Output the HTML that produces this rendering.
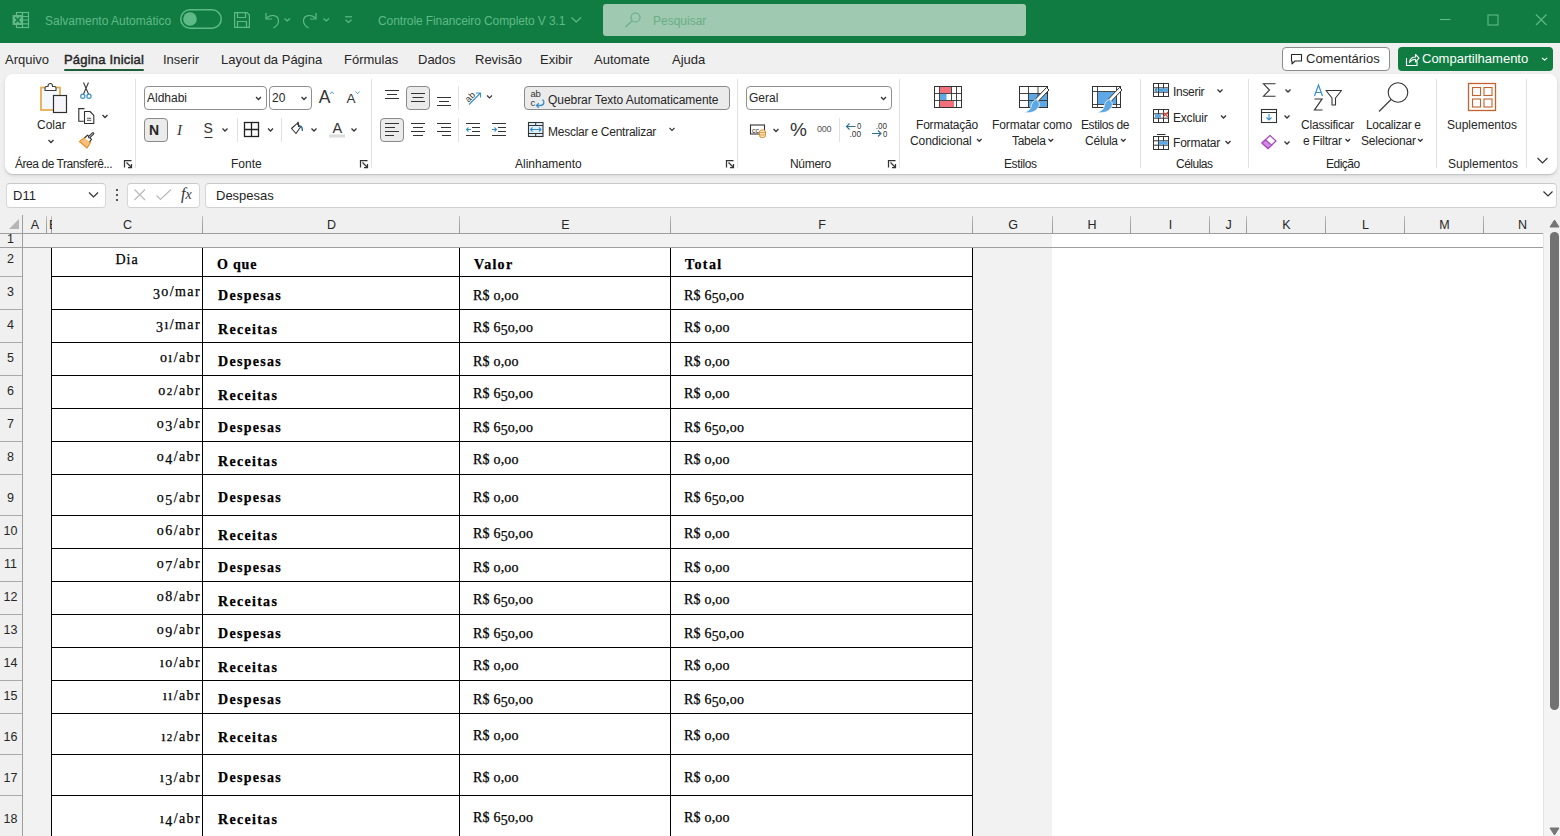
<!DOCTYPE html>
<html><head><meta charset="utf-8">
<style>
*{margin:0;padding:0;box-sizing:border-box}
html,body{width:1560px;height:836px;overflow:hidden;background:#f0f0f0;font-family:"Liberation Sans",sans-serif;color:#242424;position:relative}
.a{position:absolute;white-space:nowrap}
svg{position:absolute;overflow:visible}
#title{left:0;top:0;width:1560px;height:43px;background:#107c42}
.tt{color:#6cb98b;font-size:12px}
.menu{font-size:13px;color:#262626;top:52px;line-height:16px}
#ribbon{left:5px;top:74px;width:1552px;height:100px;background:#fff;border-radius:8px;box-shadow:0 1px 1px rgba(0,0,0,.12),0 2px 4px rgba(0,0,0,.10)}
.gl{font-size:12px;color:#262626;top:157px;line-height:14px}
.div{background:#e1e1e1;width:1px}
.rt{font-size:12px;color:#262626;line-height:16px}
.box{border:1px solid #8f8f8f;border-radius:4px;background:#fff}
.btnsel{background:#ebebeb;border:1px solid #8a8a8a;border-radius:4px}
.ch{width:8px;height:5px}
/* grid */
.ch_h{font-size:12.5px;color:#262626;top:218px;line-height:14px;text-align:center;padding-left:2px}
.rh{font-size:12.5px;color:#262626;left:0;width:21px;text-align:center;line-height:14px}
.hl{background:#000;height:1px}
.vl{background:#000;width:1px}
.gd{font-family:"Liberation Serif",serif;font-size:14px;color:#000;line-height:16px;-webkit-text-stroke:0.25px #000}
.b{font-weight:bold}
</style></head><body>

<!-- TITLE BAR -->
<div class="a" id="title"></div>
<svg style="left:0;top:0" width="1" height="1">
 <g fill="none" stroke="#5fba87" stroke-width="1.2">
  <rect x="16.5" y="12.5" width="12" height="15"/>
  <path d="M22.5 12.5 V27.5 M16.5 16.5 H28.5 M16.5 20 H28.5 M16.5 23.8 H28.5"/>
 </g>
 <rect x="12.6" y="15" width="10" height="10" fill="#5fba87"/>
 <path d="M15.2 17.2 L20.3 22.8 M20.3 17.2 L15.2 22.8" stroke="#107c41" stroke-width="1.5"/>
 <rect x="180.75" y="9.75" width="40.5" height="18.5" rx="9.25" fill="none" stroke="#5fba87" stroke-width="1.5"/>
 <circle cx="190" cy="19" r="6.8" fill="#5fba87"/>
 <g fill="none" stroke="#5fba87" stroke-width="1.2">
  <path d="M234.6 12.6 H247 L249.4 15 V27.4 H234.6 Z"/>
  <path d="M237.5 12.6 V17.5 H245.5 V12.6"/>
  <path d="M237.5 27.4 V21.5 H246.5 V27.4"/>
  <path d="M266 13 V19 H272"/><path d="M266.5 18.5 C270 14 278.5 14.5 278.5 21 C278.5 24.5 276 26.5 273.5 28"/>
  <path d="M284.5 18.5 L287.2 21 L289.9 18.5"/>
  <path d="M316 13 V19 H310"/><path d="M315.5 18.5 C312 14 303.5 14.5 303.5 21 C303.5 24.5 306 26.5 308.5 28"/>
  <path d="M323.5 18.5 L326.2 21 L328.9 18.5"/>
  <path d="M345 16.8 H352"/><path d="M345.5 19.8 L348.5 22.5 L351.5 19.8"/>
  <path d="M571.5 17.5 L576.2 22 L581 17.5"/>
 </g>
</svg>
<div class="a" style="left:45px;top:14px;font-size:12px;line-height:15px;color:#5fba87">Salvamento Automático</div>
<div class="a" style="left:378px;top:14px;font-size:12px;line-height:15px;color:#5fba87;letter-spacing:-0.1px">Controle Financeiro Completo V 3.1</div>
<div class="a" style="left:603px;top:4px;width:423px;height:32px;background:#9fc9b1;border-radius:3px"></div>
<svg style="left:0;top:0" width="1" height="1">
 <g fill="none" stroke="#6aae85" stroke-width="1.2">
  <circle cx="635.5" cy="17.5" r="4.5"/><path d="M632.3 20.8 L625.5 27"/>
 </g>
 <g fill="none" stroke="#5fba87" stroke-width="1.1">
  <path d="M1440 19.5 H1450.5"/>
  <rect x="1488" y="15" width="10" height="10"/>
  <path d="M1536 14.5 L1546.5 25 M1546.5 14.5 L1536 25"/>
 </g>
</svg>
<div class="a" style="left:653px;top:14px;font-size:12px;line-height:15px;color:#6aae85">Pesquisar</div>
<!-- comments / share -->
<div class="a" style="left:1282px;top:47px;width:108px;height:24px;border:1px solid #8c8c8c;border-radius:4px;background:#fff"></div>
<svg style="left:0;top:0" width="1" height="1"><path d="M1291.5 54.5 H1301.5 V61 H1295 L1292 63.8 V61 H1291.5 Z" fill="none" stroke="#262626" stroke-width="1.1" stroke-linejoin="round"/></svg>
<div class="a" style="left:1306px;top:51px;font-size:13px;line-height:16px;color:#262626">Comentários</div>
<div class="a" style="left:1398px;top:47px;width:155px;height:24px;background:#107c41;border-radius:4px"></div>
<svg style="left:0;top:0" width="1" height="1"><g fill="none" stroke="#fff" stroke-width="1.1" stroke-linejoin="round"><path d="M1406.5 58 V65.5 H1417 V61"/><path d="M1409.5 62.5 C1410 58.5 1412.5 57 1415.5 57 V54.5 L1419 58.2 L1415.5 61.8 V59.3 C1413 59.3 1411 60.5 1409.5 62.5 Z"/><path d="M1542 57.8 L1544.6 60.2 L1547.2 57.8"/></g></svg>
<div class="a" style="left:1422px;top:51px;font-size:13px;line-height:16px;color:#fff">Compartilhamento</div>


<!-- MENU -->
<div class="a menu" style="left:5px">Arquivo</div>
<div class="a menu" style="left:64px;letter-spacing:0.2px;-webkit-text-stroke:0.45px #262626">Página Inicial</div>
<div class="a" style="left:64px;top:69px;width:80px;height:2px;background:#1b5e37;border-radius:1px"></div>
<div class="a menu" style="left:163px">Inserir</div>
<div class="a menu" style="left:221px">Layout da Página</div>
<div class="a menu" style="left:344px">Fórmulas</div>
<div class="a menu" style="left:418px">Dados</div>
<div class="a menu" style="left:475px">Revisão</div>
<div class="a menu" style="left:540px">Exibir</div>
<div class="a menu" style="left:594px">Automate</div>
<div class="a menu" style="left:672px">Ajuda</div>

<!-- RIBBON -->
<div class="a" id="ribbon"></div>
<!-- dividers -->
<div class="a div" style="left:135px;top:79px;height:89px"></div>
<div class="a div" style="left:371px;top:79px;height:89px"></div>
<div class="a div" style="left:737px;top:79px;height:89px"></div>
<div class="a div" style="left:899px;top:79px;height:89px"></div>
<div class="a div" style="left:1140px;top:79px;height:89px"></div>
<div class="a div" style="left:1248px;top:79px;height:89px"></div>
<div class="a div" style="left:1436px;top:79px;height:89px"></div>
<div class="a div" style="left:1526px;top:79px;height:89px"></div>
<!-- group labels -->
<div class="a gl" style="left:15px;letter-spacing:-0.45px">Área de Transferê...</div>
<div class="a gl" style="left:231px">Fonte</div>
<div class="a gl" style="left:515px">Alinhamento</div>
<div class="a gl" style="left:790px;letter-spacing:-0.3px">Número</div>
<div class="a gl" style="left:1004px;letter-spacing:-0.4px">Estilos</div>
<div class="a gl" style="left:1176px;letter-spacing:-0.5px">Células</div>
<div class="a gl" style="left:1326px;letter-spacing:-0.5px">Edição</div>
<div class="a gl" style="left:1448px">Suplementos</div>
<!-- launchers + collapse -->
<svg style="left:0;top:0" width="1" height="1">
 <g fill="none" stroke="#333" stroke-width="1.25">
  <path d="M124.5 167.5 V160.5 H131.5 M126.5 162.5 L131.5 167.5 M128 167.5 H131.5 V164"/>
  <path d="M360.5 167.5 V160.5 H367.5 M362.5 162.5 L367.5 167.5 M364 167.5 H367.5 V164"/>
  <path d="M726.5 167.5 V160.5 H733.5 M728.5 162.5 L733.5 167.5 M730 167.5 H733.5 V164"/>
  <path d="M888.5 167.5 V160.5 H895.5 M890.5 162.5 L895.5 167.5 M892 167.5 H895.5 V164"/>
  <path d="M1537.5 158 L1542.5 163 L1547.5 158" stroke-width="1.2"/>
 </g>
</svg>

<!-- CLIPBOARD -->
<svg style="left:0;top:0" width="1" height="1">
 <rect x="41" y="87.5" width="19" height="22.5" fill="#f3f8fc" stroke="#e3a947" stroke-width="1.7"/>
 <path d="M45 90.5 V88 C45 87 45.5 86.5 46.5 86.5 H48 C48 84.5 49 83.5 50.3 83.5 C51.6 83.5 52.6 84.5 52.6 86.5 H54.5 C55.5 86.5 56 87 56 88 V90.5 Z" fill="#fff" stroke="#3b3b3b" stroke-width="1.1" stroke-linejoin="round"/>
 <rect x="53.5" y="95.5" width="13" height="17" fill="#f5f5fb" stroke="#2f2f2f" stroke-width="1.2"/>
 <path d="M48.5 140 L51 142.5 L53.5 140" fill="none" stroke="#333" stroke-width="1.25"/>
 <!-- scissors -->
 <path d="M83.5 82.5 L88.5 94 M88.5 82.5 L83.5 94" fill="none" stroke="#3b3b3b" stroke-width="1.1"/>
 <circle cx="82.8" cy="96.2" r="2.1" fill="none" stroke="#3a8fc8" stroke-width="1.2"/>
 <circle cx="89" cy="96.2" r="2.1" fill="none" stroke="#3a8fc8" stroke-width="1.2"/>
 <!-- copy -->
 <path d="M84.5 108.6 H78.8 V121.2 H83.8" fill="none" stroke="#2f2f2f" stroke-width="1.1"/>
 <path d="M84.5 111.5 H90 L93.8 115.3 V123.5 H84.5 Z" fill="#fff" stroke="#2f2f2f" stroke-width="1.1" stroke-linejoin="round"/>
 <path d="M87 118.3 H91.2 M87 120.3 H91.2" stroke="#3b3b3b" stroke-width="0.9"/>
 <path d="M102.5 115 L105 117.5 L107.5 115" fill="none" stroke="#333" stroke-width="1.25"/>
 <!-- brush -->
 <path d="M79.5 141.5 L85.5 137 L90.5 142.5 L87 148 Z" fill="#f7c07a" stroke="#e8912c" stroke-width="1.2" stroke-linejoin="round"/>
 <path d="M84.5 138 L87.5 135.2 L91.5 139.3 L89.5 142" fill="#fff" stroke="#2f2f2f" stroke-width="1.1" stroke-linejoin="round"/>
 <path d="M89.3 137 L93 133.5" stroke="#2f2f2f" stroke-width="2.6" stroke-linecap="round"/>
 <path d="M89.3 137 L93 133.5" stroke="#fff" stroke-width="0.8" stroke-linecap="round"/>
</svg>
<div class="a rt" style="left:37px;top:117px">Colar</div>

<!-- FONT -->
<div class="a box" style="left:144px;top:86px;width:123px;height:24px"></div>
<div class="a rt" style="left:147px;top:90px">Aldhabi</div>
<div class="a box" style="left:269px;top:86px;width:43px;height:24px"></div>
<div class="a rt" style="left:272px;top:90px">20</div>
<div class="a btnsel" style="left:144px;top:118px;width:24px;height:24px"></div>
<svg style="left:0;top:0" width="1" height="1">
 <g fill="none" stroke="#333" stroke-width="1.25">
  <path d="M256 97 L258.5 99.5 L261 97"/><path d="M301.5 97 L304 99.5 L306.5 97"/>
  <path d="M222.5 128.5 L225 131 L227.5 128.5"/><path d="M268 128.5 L270.5 131 L273 128.5"/>
  <path d="M311.5 128.5 L314 131 L316.5 128.5"/><path d="M351.5 128.5 L354 131 L356.5 128.5"/>
 </g>
 <text x="318.8" y="103" font-family="Liberation Sans" font-size="17.5" fill="#333">A</text>
 <path d="M329.8 94 L331.8 91.8 L333.8 94" fill="none" stroke="#5a9fd0" stroke-width="1"/>
 <text x="346.5" y="103" font-family="Liberation Sans" font-size="13.5" fill="#333">A</text>
 <path d="M355.5 91.5 L357.5 93.7 L359.5 91.5" fill="none" stroke="#5a9fd0" stroke-width="1"/>
 <rect x="244.5" y="122.5" width="14" height="14" fill="none" stroke="#222" stroke-width="1.3"/>
 <path d="M251.5 122.5 V136.5 M244.5 129.5 H258.5" stroke="#222" stroke-width="1.3"/>
 <path d="M291.5 128.5 L296 124.3 C296.5 123.8 297 123.5 297.5 124 L300.5 127 L296 133.5 Z" fill="#fff" stroke="#333" stroke-width="1.1" stroke-linejoin="round"/><path d="M297.5 124 V122.5 C297.5 121.8 298.5 121.8 298.5 122.5 V127" fill="none" stroke="#333" stroke-width="1"/>
 <path d="M299.5 126.5 C301.5 125.5 302.5 127.5 302.3 131" fill="none" stroke="#2c6e9e" stroke-width="1.4"/>
 <text x="332.5" y="133" font-family="Liberation Sans" font-size="14.5" fill="#333">A</text>
 <rect x="329" y="134.5" width="16" height="3" fill="#dcdcdc"/>
 <path d="M204.5 137.5 H212.5" stroke="#333" stroke-width="1.1"/>
</svg>
<div class="a" style="left:237px;top:118px;width:1px;height:24px;background:#e1e1e1"></div>
<div class="a" style="left:281px;top:118px;width:1px;height:24px;background:#e1e1e1"></div>
<div class="a" style="left:149px;top:122px;font-size:14px;line-height:16px;font-weight:bold;color:#262626">N</div>
<div class="a" style="left:177px;top:122px;font-family:'Liberation Serif',serif;font-size:15px;line-height:16px;font-style:italic;color:#333">I</div>
<div class="a" style="left:203.5px;top:120px;font-size:14px;line-height:16px;color:#333">S</div>

<!-- ALIGNMENT -->
<div class="a btnsel" style="left:406px;top:86px;width:24px;height:24px"></div>
<div class="a btnsel" style="left:380px;top:118px;width:24px;height:24px"></div>
<div class="a btnsel" style="left:524px;top:86px;width:206px;height:24px"></div>
<div class="a" style="left:458px;top:86px;width:1px;height:24px;background:#e1e1e1"></div>
<div class="a" style="left:458px;top:118px;width:1px;height:24px;background:#e1e1e1"></div>
<svg style="left:0;top:0" width="1" height="1">
 <g stroke="#333" stroke-width="1.1" fill="none">
  <path d="M385 90.5 H399 M387 94.5 H397 M385 98.5 H399"/>
  <path d="M411 93.5 H425 M412.5 97.5 H423.5 M411 101.5 H425"/>
  <path d="M437 97.5 H451 M439 101.5 H449 M437 105.5 H451"/>
  <path d="M385 123.5 H399 M385 127.5 H395 M385 131.5 H399 M385 135.5 H394"/>
  <path d="M411 123.5 H425 M413 127.5 H423 M411 131.5 H425 M413 135.5 H423"/>
  <path d="M437 123.5 H451 M441 127.5 H451 M437 131.5 H451 M442 135.5 H451"/>
  <path d="M466 123.5 H480 M472 127.5 H480 M472 131.5 H480 M466 135.5 H480"/>
  <path d="M492 123.5 H506 M498 127.5 H506 M498 131.5 H506 M492 135.5 H506"/>
  <path d="M487 95.5 L489.5 98 L492 95.5"/>
  <path d="M669.5 128 L672 130.5 L674.5 128"/>
 </g>
 <g stroke="#3a8fc8" stroke-width="1.1" fill="none">
  <path d="M471 129.5 H466.5 M468.5 127.5 L466.5 129.5 L468.5 131.5"/>
  <path d="M492 129.5 H496.5 M494.5 127.5 L496.5 129.5 L494.5 131.5"/>
  <path d="M469 104.5 L480.5 93 M476 93 H480.5 V97.5"/>
 </g>
 <text x="465" y="100" transform="rotate(-45 470 97)" font-family="Liberation Sans" font-size="9" fill="#333">ab</text>
 <text x="530.5" y="97" font-family="Liberation Sans" font-size="9.5" fill="#333" letter-spacing="-0.3">ab</text>
 <text x="530.5" y="105.5" font-family="Liberation Sans" font-size="9.5" fill="#333">c</text>
 <path d="M542.5 99.5 C545 101.5 544 105.5 540.5 105.5 H536.5 M538.7 103.3 L536.5 105.5 L538.7 107.7" fill="none" stroke="#3a8fc8" stroke-width="1.3"/>
 <rect x="528.5" y="122.5" width="14.5" height="14" fill="#dff0fa" stroke="#333" stroke-width="1.1"/>
 <path d="M528.5 125.5 H543 M528.5 133.5 H543 M535.7 122.5 V125.5 M535.7 133.5 V136.5" stroke="#333" stroke-width="1"/>
 <path d="M530.5 129.5 H541 M532.5 127.5 L530.5 129.5 L532.5 131.5 M539 127.5 L541 129.5 L539 131.5" fill="none" stroke="#3a8fc8" stroke-width="1.1"/>
</svg>
<div class="a rt" style="left:548px;top:92px;letter-spacing:-0.05px">Quebrar Texto Automaticamente</div>
<div class="a rt" style="left:548px;top:124px;letter-spacing:-0.25px">Mesclar e Centralizar</div>

<!-- NUMBER -->
<div class="a box" style="left:746px;top:86px;width:146px;height:24px"></div>
<div class="a rt" style="left:749px;top:90px">Geral</div>
<div class="a" style="left:839px;top:118px;width:1px;height:24px;background:#e1e1e1"></div>
<svg style="left:0;top:0" width="1" height="1">
 <path d="M881 97 L883.5 99.5 L886 97" fill="none" stroke="#333" stroke-width="1.25"/>
 <path d="M773.5 129 L776 131.5 L778.5 129" fill="none" stroke="#333" stroke-width="1.25"/>
 <rect x="750.5" y="125" width="14" height="9" fill="none" stroke="#333" stroke-width="1.1"/>
 <text x="752" y="132.5" font-family="Liberation Sans" font-size="7" fill="#333">cc</text>
 <rect x="759.5" y="130" width="6" height="7.5" rx="2" fill="#fbe3bd" stroke="#e0912f" stroke-width="1"/>
 <path d="M759.5 132.5 H765.5 M759.5 135 H765.5" stroke="#e0912f" stroke-width="0.8"/>
 <text x="857" y="128.8" font-family="Liberation Sans" font-size="9.5" fill="#333" textLength="4.3" lengthAdjust="spacingAndGlyphs">0</text>
 <text x="849.5" y="137" font-family="Liberation Sans" font-size="9.5" fill="#333" textLength="11.6" lengthAdjust="spacingAndGlyphs">.00</text>
 <text x="875.8" y="128.8" font-family="Liberation Sans" font-size="9.5" fill="#333" textLength="11.3" lengthAdjust="spacingAndGlyphs">.00</text>
 <text x="883" y="137" font-family="Liberation Sans" font-size="9.5" fill="#333" textLength="4.3" lengthAdjust="spacingAndGlyphs">0</text>
 <path d="M855.5 126.5 H846.5 M849.5 123.5 L846.5 126.5 L849.5 129.5" fill="none" stroke="#2f6f9a" stroke-width="1.1"/>
 <path d="M872 133.5 H881 M878 130.5 L881 133.5 L878 136.5" fill="none" stroke="#2f6f9a" stroke-width="1.1"/>
</svg>
<div class="a" style="left:790px;top:120px;font-size:19px;line-height:20px;color:#333">%</div>
<div class="a" style="left:817px;top:124px;font-size:9px;line-height:10px;color:#555;letter-spacing:-0.3px">000</div>

<!-- STYLES -->
<svg style="left:0;top:0" width="1" height="1">
 <!-- cond fmt -->
 <rect x="934.5" y="86.5" width="27" height="21" fill="#fff" stroke="#333" stroke-width="1"/>
 <path d="M934.5 93.5 H961.5 M934.5 100.5 H961.5 M939.5 86.5 V107.5 M951.5 86.5 V107.5 M956.5 86.5 V107.5" stroke="#333" stroke-width="0.9" fill="none"/>
 <rect x="940" y="87" width="11" height="6" fill="#f1707b"/>
 <rect x="940" y="101" width="14" height="6" fill="#f1707b"/>
 <rect x="940" y="94" width="6.5" height="6" fill="#5ea8e6"/>
 <!-- fmt table -->
 <rect x="1019.5" y="86.5" width="28" height="21" fill="#fff" stroke="#333" stroke-width="1"/>
 <rect x="1028" y="93" width="19" height="14" fill="#5ea8e6"/>
 <path d="M1019.5 93.5 H1047.5 M1019.5 100.5 H1047.5 M1028.5 86.5 V107.5 M1038 86.5 V107.5" stroke="#333" stroke-width="0.9" fill="none"/>
 <path d="M1049 90 L1038 101.5 L1035.5 99 L1046.5 87.5 Z" fill="#fff" stroke="#333" stroke-width="1" stroke-linejoin="round"/>
 <path d="M1037.5 99.5 C1033 99.5 1031.5 104 1031 107 C1030.5 109.5 1027 111.5 1024 112.5 C1029 113.5 1035 112.5 1038 108 C1039.5 106 1040 103 1038 101.5 Z" fill="#5ea8e6" stroke="#fff" stroke-width="0.8"/>
 <!-- cell styles -->
 <rect x="1092.5" y="86.5" width="28" height="21" fill="#fff" stroke="#333" stroke-width="1"/>
 <rect x="1098" y="92" width="19" height="12" fill="#5ea8e6"/>
 <path d="M1092.5 91.5 H1120.5 M1092.5 104.5 H1120.5 M1097.5 86.5 V107.5 M1116.5 86.5 V107.5" stroke="#333" stroke-width="0.9" fill="none"/>
 <path d="M1122 90 L1111 101.5 L1108.5 99 L1119.5 87.5 Z" fill="#fff" stroke="#333" stroke-width="1" stroke-linejoin="round"/>
 <path d="M1110.5 99.5 C1106 99.5 1104.5 104 1104 107 C1103.5 109.5 1100 111.5 1097 112.5 C1102 113.5 1108 112.5 1111 108 C1112.5 106 1113 103 1111 101.5 Z" fill="#5ea8e6" stroke="#fff" stroke-width="0.8"/>
 <g fill="none" stroke="#333" stroke-width="1.25">
  <path d="M977 139 L979.3 141.3 L981.6 139"/>
  <path d="M1048.5 139 L1050.8 141.3 L1053.1 139"/>
  <path d="M1121 139 L1123.3 141.3 L1125.6 139"/>
 </g>
</svg>
<div class="a rt" style="left:916px;top:117px;letter-spacing:-0.2px">Formatação</div>
<div class="a rt" style="left:910px;top:133px;letter-spacing:-0.1px">Condicional</div>
<div class="a rt" style="left:992px;top:117px;letter-spacing:-0.1px">Formatar como</div>
<div class="a rt" style="left:1012px;top:133px;letter-spacing:-0.3px">Tabela</div>
<div class="a rt" style="left:1081px;top:117px;letter-spacing:-0.4px">Estilos de</div>
<div class="a rt" style="left:1085px;top:133px;letter-spacing:-0.2px">Célula</div>

<!-- CELLS -->
<svg style="left:0;top:0" width="1" height="1">
 <g stroke="#333" stroke-width="1" fill="none">
  <rect x="1153.5" y="83.5" width="15" height="13"/>
  <path d="M1153.5 87.8 H1168.5 M1153.5 92.2 H1168.5 M1158.5 83.5 V96.5 M1163.5 83.5 V96.5"/>
  <rect x="1153.5" y="109.5" width="15" height="13"/>
  <path d="M1153.5 113.8 H1168.5 M1153.5 118.2 H1168.5 M1158.5 109.5 V122.5 M1163.5 109.5 V122.5"/>
  <rect x="1153.5" y="136.5" width="15" height="13"/>
  <path d="M1153.5 140.8 H1168.5 M1153.5 145.2 H1168.5 M1158.5 136.5 V149.5 M1163.5 136.5 V149.5 M1157 134.5 H1165.5"/>
 </g>
 <rect x="1159" y="88.3" width="9" height="3.5" fill="#5ea8e6"/>
 <path d="M1163 90 H1155 M1157 88 L1155 90 L1157 92" stroke="#3a8fc8" stroke-width="1.1" fill="#fff"/>
 <rect x="1155" y="114.3" width="6" height="3.5" fill="#5ea8e6"/>
 <path d="M1163 112 L1168 117 M1168 112 L1163 117" stroke="#e0483e" stroke-width="1.1"/>
 <rect x="1158.8" y="141.2" width="9" height="3.5" fill="#5ea8e6"/>
 <g fill="none" stroke="#333" stroke-width="1.25">
  <path d="M1217.5 89.5 L1220 92 L1222.5 89.5"/>
  <path d="M1221 115.5 L1223.5 118 L1226 115.5"/>
  <path d="M1225.5 141 L1228 143.5 L1230.5 141"/>
 </g>
</svg>
<div class="a rt" style="left:1173px;top:84px;letter-spacing:-0.3px">Inserir</div>
<div class="a rt" style="left:1173px;top:110px;letter-spacing:-0.2px">Excluir</div>
<div class="a rt" style="left:1173px;top:135px;letter-spacing:-0.2px">Formatar</div>

<!-- EDITING -->
<svg style="left:0;top:0" width="1" height="1">
 <path d="M1275.5 83.8 H1263.5 L1269.5 90 L1263.5 96.2 H1275.5" fill="none" stroke="#333" stroke-width="1.1"/>
 <rect x="1261.5" y="109.5" width="15" height="13" fill="none" stroke="#333" stroke-width="1.1"/>
 <path d="M1261.5 112.5 H1276.5" stroke="#333" stroke-width="1"/>
 <path d="M1269 114 V120 M1266.5 117.5 L1269 120 L1271.5 117.5" fill="none" stroke="#3a8fc8" stroke-width="1.1"/>
 <path d="M1262 143 L1270 135.5 L1276 141 L1268 148.5 Z" fill="#fff" stroke="#a84bbd" stroke-width="1.2" stroke-linejoin="round"/>
 <path d="M1262 143 L1265.5 139.7 L1271.7 145.3 L1268 148.5 Z" fill="#d08ce0" stroke="#a84bbd" stroke-width="1.2" stroke-linejoin="round"/>
 <g fill="none" stroke="#333" stroke-width="1.25">
  <path d="M1285.5 89.5 L1288 92 L1290.5 89.5"/>
  <path d="M1284.5 115.5 L1287 118 L1289.5 115.5"/>
  <path d="M1284.5 141.5 L1287 144 L1289.5 141.5"/>
  <path d="M1345.5 139 L1347.8 141.3 L1350.1 139"/>
  <path d="M1418 139 L1420.3 141.3 L1422.6 139"/>
 </g>
 <path d="M1314.5 96 L1318.5 85 L1322.5 96 M1316 92.5 H1321" fill="none" stroke="#3a8fc8" stroke-width="1.2"/>
 <path d="M1314.5 99 H1322 L1314.5 110 H1322.5" fill="none" stroke="#333" stroke-width="1.2"/>
 <path d="M1326 90.5 H1341.5 L1335.5 98 V105 H1332 V98 Z" fill="none" stroke="#333" stroke-width="1.1" stroke-linejoin="round"/>
 <circle cx="1398" cy="92.5" r="9.8" fill="none" stroke="#333" stroke-width="1.1"/>
 <path d="M1391 99.5 L1379 111.5" stroke="#333" stroke-width="1.1"/>
 <!-- addins -->
 <rect x="1468.5" y="83.5" width="27" height="27" fill="none" stroke="#c4622d" stroke-width="1.3"/>
 <rect x="1472.5" y="87.5" width="8" height="8" fill="none" stroke="#c4622d" stroke-width="1.1"/>
 <rect x="1484" y="87.5" width="8" height="8" fill="none" stroke="#c4622d" stroke-width="1.1"/>
 <rect x="1472.5" y="99" width="8" height="8" fill="none" stroke="#c4622d" stroke-width="1.1"/>
 <rect x="1484" y="99" width="8" height="8" fill="none" stroke="#c4622d" stroke-width="1.1"/>
</svg>
<div class="a rt" style="left:1301px;top:117px;letter-spacing:-0.2px">Classificar</div>
<div class="a rt" style="left:1303px;top:133px;letter-spacing:-0.2px">e Filtrar</div>
<div class="a rt" style="left:1366px;top:117px;letter-spacing:-0.3px">Localizar e</div>
<div class="a rt" style="left:1361px;top:133px;letter-spacing:-0.2px">Selecionar</div>
<div class="a rt" style="left:1447px;top:117px">Suplementos</div>


<!-- FORMULA BAR -->
<div class="a box" style="left:6px;top:183px;width:100px;height:25px;border-color:#c9c9c9 #d6d6d6 #d0d0d0"></div>
<div class="a" style="left:13px;top:188px;font-size:13px;line-height:15px">D11</div>
<div class="a box" style="left:127px;top:183px;width:73px;height:25px;border-color:#c9c9c9 #d6d6d6 #d0d0d0"></div>
<div class="a box" style="left:205px;top:183px;width:1352px;height:25px;border-color:#c9c9c9 #d6d6d6 #d0d0d0"></div>
<svg style="left:0;top:0" width="1" height="1"><path d="M1543.5 191.5 L1548 196 L1552.5 191.5" fill="none" stroke="#333" stroke-width="1.2"/></svg>
<div class="a" style="left:216px;top:188px;font-size:13px;line-height:15px">Despesas</div>
<svg style="left:0;top:0" width="1" height="1">
 <path d="M89 192.5 L93.5 197 L98 192.5" fill="none" stroke="#333" stroke-width="1.2"/>
 <circle cx="117" cy="190" r="1.1" fill="#333"/><circle cx="117" cy="195" r="1.1" fill="#333"/><circle cx="117" cy="200" r="1.1" fill="#333"/>
 <path d="M134.5 189.5 L145 200 M145 189.5 L134.5 200" stroke="#b8b8b8" stroke-width="1.1"/>
 <path d="M156.5 195.5 L160.5 199.5 L171 189.5" fill="none" stroke="#b8b8b8" stroke-width="1.1"/>
</svg>
<div class="a" style="left:181px;top:185px;font-family:'Liberation Serif',serif;font-style:italic;font-size:16px;line-height:18px;color:#333">f<span style="font-size:14px">x</span></div>

<!-- GRID -->
<div class="a" style="left:22px;top:233px;width:1521px;height:603px;background:#fff"></div>
<div class="a" style="left:22px;top:233px;width:1030px;height:14px;background:#f2f2f2"></div>
<div class="a" style="left:22px;top:247px;width:29px;height:589px;background:#f2f2f2"></div>
<div class="a" style="left:972px;top:247px;width:80px;height:589px;background:#f2f2f2"></div>
<div class="a" style="left:0;top:208px;width:1543px;height:25px;background:#f0f0f0"></div>
<svg style="left:0;top:0" width="1" height="1"><path d="M9 229 L19 229 L19 219 Z" fill="#b5b5b5"/></svg>
<div class="a" style="left:46px;top:216px;width:1px;height:17px;background:linear-gradient(#c4c4c4,#a8a8a8 40%,#9a9a9a)"></div>
<div class="a" style="left:51px;top:216px;width:1px;height:17px;background:linear-gradient(#c4c4c4,#a8a8a8 40%,#9a9a9a)"></div>
<div class="a" style="left:202px;top:216px;width:1px;height:17px;background:linear-gradient(#c4c4c4,#a8a8a8 40%,#9a9a9a)"></div>
<div class="a" style="left:459px;top:216px;width:1px;height:17px;background:linear-gradient(#c4c4c4,#a8a8a8 40%,#9a9a9a)"></div>
<div class="a" style="left:670px;top:216px;width:1px;height:17px;background:linear-gradient(#c4c4c4,#a8a8a8 40%,#9a9a9a)"></div>
<div class="a" style="left:972px;top:216px;width:1px;height:17px;background:linear-gradient(#c4c4c4,#a8a8a8 40%,#9a9a9a)"></div>
<div class="a" style="left:1052px;top:216px;width:1px;height:17px;background:linear-gradient(#c4c4c4,#a8a8a8 40%,#9a9a9a)"></div>
<div class="a" style="left:1130px;top:216px;width:1px;height:17px;background:linear-gradient(#c4c4c4,#a8a8a8 40%,#9a9a9a)"></div>
<div class="a" style="left:1209px;top:216px;width:1px;height:17px;background:linear-gradient(#c4c4c4,#a8a8a8 40%,#9a9a9a)"></div>
<div class="a" style="left:1246px;top:216px;width:1px;height:17px;background:linear-gradient(#c4c4c4,#a8a8a8 40%,#9a9a9a)"></div>
<div class="a" style="left:1325px;top:216px;width:1px;height:17px;background:linear-gradient(#c4c4c4,#a8a8a8 40%,#9a9a9a)"></div>
<div class="a" style="left:1404px;top:216px;width:1px;height:17px;background:linear-gradient(#c4c4c4,#a8a8a8 40%,#9a9a9a)"></div>
<div class="a" style="left:1483px;top:216px;width:1px;height:17px;background:linear-gradient(#c4c4c4,#a8a8a8 40%,#9a9a9a)"></div>
<div class="a" style="left:22px;top:215px;width:1px;height:621px;background:#9e9e9e"></div>
<div class="a ch_h" style="left:22px;width:24px">A</div>
<div class="a ch_h" style="left:47px;width:5px;overflow:hidden;text-align:left">B</div>
<div class="a ch_h" style="left:51px;width:151px">C</div>
<div class="a ch_h" style="left:202px;width:257px">D</div>
<div class="a ch_h" style="left:459px;width:211px">E</div>
<div class="a ch_h" style="left:670px;width:302px">F</div>
<div class="a ch_h" style="left:972px;width:80px">G</div>
<div class="a ch_h" style="left:1052px;width:78px">H</div>
<div class="a ch_h" style="left:1130px;width:79px">I</div>
<div class="a ch_h" style="left:1209px;width:37px">J</div>
<div class="a ch_h" style="left:1246px;width:79px">K</div>
<div class="a ch_h" style="left:1325px;width:79px">L</div>
<div class="a ch_h" style="left:1404px;width:79px">M</div>
<div class="a ch_h" style="left:1483px;width:77px">N</div>
<div class="a" style="left:0;top:233px;width:1543px;height:1px;background:#9e9e9e"></div>
<div class="a" style="left:0;top:247px;width:1543px;height:1px;background:#9e9e9e"></div>
<div class="a rh" style="top:232px">1</div>
<div class="a rh" style="top:252px">2</div>
<div class="a" style="left:0;top:276px;width:22px;height:1px;background:#aaaaaa"></div>
<div class="a rh" style="top:285px">3</div>
<div class="a" style="left:0;top:309px;width:22px;height:1px;background:#aaaaaa"></div>
<div class="a rh" style="top:318px">4</div>
<div class="a" style="left:0;top:342px;width:22px;height:1px;background:#aaaaaa"></div>
<div class="a rh" style="top:351px">5</div>
<div class="a" style="left:0;top:375px;width:22px;height:1px;background:#aaaaaa"></div>
<div class="a rh" style="top:384px">6</div>
<div class="a" style="left:0;top:408px;width:22px;height:1px;background:#aaaaaa"></div>
<div class="a rh" style="top:417px">7</div>
<div class="a" style="left:0;top:441px;width:22px;height:1px;background:#aaaaaa"></div>
<div class="a rh" style="top:450px">8</div>
<div class="a" style="left:0;top:474px;width:22px;height:1px;background:#aaaaaa"></div>
<div class="a rh" style="top:491px">9</div>
<div class="a" style="left:0;top:515px;width:22px;height:1px;background:#aaaaaa"></div>
<div class="a rh" style="top:524px">10</div>
<div class="a" style="left:0;top:548px;width:22px;height:1px;background:#aaaaaa"></div>
<div class="a rh" style="top:557px">11</div>
<div class="a" style="left:0;top:581px;width:22px;height:1px;background:#aaaaaa"></div>
<div class="a rh" style="top:590px">12</div>
<div class="a" style="left:0;top:614px;width:22px;height:1px;background:#aaaaaa"></div>
<div class="a rh" style="top:623px">13</div>
<div class="a" style="left:0;top:647px;width:22px;height:1px;background:#aaaaaa"></div>
<div class="a rh" style="top:656px">14</div>
<div class="a" style="left:0;top:680px;width:22px;height:1px;background:#aaaaaa"></div>
<div class="a rh" style="top:689px">15</div>
<div class="a" style="left:0;top:713px;width:22px;height:1px;background:#aaaaaa"></div>
<div class="a rh" style="top:730px">16</div>
<div class="a" style="left:0;top:754px;width:22px;height:1px;background:#aaaaaa"></div>
<div class="a rh" style="top:771px">17</div>
<div class="a" style="left:0;top:795px;width:22px;height:1px;background:#aaaaaa"></div>
<div class="a rh" style="top:812px">18</div>
<div class="a" style="left:0;top:836px;width:22px;height:1px;background:#aaaaaa"></div>
<div class="a hl" style="left:51px;top:276px;width:922px"></div>
<div class="a hl" style="left:51px;top:309px;width:922px"></div>
<div class="a hl" style="left:51px;top:342px;width:922px"></div>
<div class="a hl" style="left:51px;top:375px;width:922px"></div>
<div class="a hl" style="left:51px;top:408px;width:922px"></div>
<div class="a hl" style="left:51px;top:441px;width:922px"></div>
<div class="a hl" style="left:51px;top:474px;width:922px"></div>
<div class="a hl" style="left:51px;top:515px;width:922px"></div>
<div class="a hl" style="left:51px;top:548px;width:922px"></div>
<div class="a hl" style="left:51px;top:581px;width:922px"></div>
<div class="a hl" style="left:51px;top:614px;width:922px"></div>
<div class="a hl" style="left:51px;top:647px;width:922px"></div>
<div class="a hl" style="left:51px;top:680px;width:922px"></div>
<div class="a hl" style="left:51px;top:713px;width:922px"></div>
<div class="a hl" style="left:51px;top:754px;width:922px"></div>
<div class="a hl" style="left:51px;top:795px;width:922px"></div>
<div class="a hl" style="left:51px;top:836px;width:922px"></div>
<div class="a vl" style="left:51px;top:248px;height:588px"></div>
<div class="a vl" style="left:202px;top:248px;height:588px"></div>
<div class="a vl" style="left:459px;top:248px;height:588px"></div>
<div class="a vl" style="left:670px;top:248px;height:588px"></div>
<div class="a vl" style="left:972px;top:248px;height:588px"></div>
<div class="a gd" style="left:51px;width:151px;text-align:center;top:252px;letter-spacing:1px;padding-left:1px">Dia</div>
<div class="a gd b" style="left:217px;top:257px;letter-spacing:0.8px">O que</div>
<div class="a gd b" style="left:474px;top:257px;letter-spacing:1.3px">Valor</div>
<div class="a gd b" style="left:685px;top:257px;letter-spacing:1.4px">Total</div>
<div class="a gd" style="left:51px;width:150px;text-align:right;top:284px;letter-spacing:1.4px"><span style="position:relative;top:3px">3</span>o/mar</div>
<div class="a gd b" style="left:218px;top:288px;letter-spacing:1.3px">Despesas</div>
<div class="a gd" style="left:473px;top:288px;letter-spacing:0.2px">R$ o,oo</div>
<div class="a gd" style="left:684px;top:288px;letter-spacing:0.2px">R$ 6<span style="position:relative;top:3px">5</span>o,oo</div>
<div class="a gd" style="left:51px;width:150px;text-align:right;top:317px;letter-spacing:1.4px"><span style="position:relative;top:3px">3</span>ı/mar</div>
<div class="a gd b" style="left:218px;top:322px;letter-spacing:1.3px">Receitas</div>
<div class="a gd" style="left:473px;top:320px;letter-spacing:0.2px">R$ 6<span style="position:relative;top:3px">5</span>o,oo</div>
<div class="a gd" style="left:684px;top:320px;letter-spacing:0.2px">R$ o,oo</div>
<div class="a gd" style="left:51px;width:150px;text-align:right;top:350px;letter-spacing:1.4px">oı/abr</div>
<div class="a gd b" style="left:218px;top:354px;letter-spacing:1.3px">Despesas</div>
<div class="a gd" style="left:473px;top:354px;letter-spacing:0.2px">R$ o,oo</div>
<div class="a gd" style="left:684px;top:354px;letter-spacing:0.2px">R$ o,oo</div>
<div class="a gd" style="left:51px;width:150px;text-align:right;top:383px;letter-spacing:1.4px">o<span style="font-size:11px">2</span>/abr</div>
<div class="a gd b" style="left:218px;top:388px;letter-spacing:1.3px">Receitas</div>
<div class="a gd" style="left:473px;top:386px;letter-spacing:0.2px">R$ 6<span style="position:relative;top:3px">5</span>o,oo</div>
<div class="a gd" style="left:684px;top:386px;letter-spacing:0.2px">R$ o,oo</div>
<div class="a gd" style="left:51px;width:150px;text-align:right;top:416px;letter-spacing:1.4px">o<span style="position:relative;top:3px">3</span>/abr</div>
<div class="a gd b" style="left:218px;top:420px;letter-spacing:1.3px">Despesas</div>
<div class="a gd" style="left:473px;top:420px;letter-spacing:0.2px">R$ 6<span style="position:relative;top:3px">5</span>o,oo</div>
<div class="a gd" style="left:684px;top:420px;letter-spacing:0.2px">R$ 6<span style="position:relative;top:3px">5</span>o,oo</div>
<div class="a gd" style="left:51px;width:150px;text-align:right;top:449px;letter-spacing:1.4px">o<span style="position:relative;top:3px">4</span>/abr</div>
<div class="a gd b" style="left:218px;top:454px;letter-spacing:1.3px">Receitas</div>
<div class="a gd" style="left:473px;top:452px;letter-spacing:0.2px">R$ o,oo</div>
<div class="a gd" style="left:684px;top:452px;letter-spacing:0.2px">R$ o,oo</div>
<div class="a gd" style="left:51px;width:150px;text-align:right;top:490px;letter-spacing:1.4px">o<span style="position:relative;top:3px">5</span>/abr</div>
<div class="a gd b" style="left:218px;top:490px;letter-spacing:1.3px">Despesas</div>
<div class="a gd" style="left:473px;top:490px;letter-spacing:0.2px">R$ o,oo</div>
<div class="a gd" style="left:684px;top:490px;letter-spacing:0.2px">R$ 6<span style="position:relative;top:3px">5</span>o,oo</div>
<div class="a gd" style="left:51px;width:150px;text-align:right;top:523px;letter-spacing:1.4px">o6/abr</div>
<div class="a gd b" style="left:218px;top:528px;letter-spacing:1.3px">Receitas</div>
<div class="a gd" style="left:473px;top:526px;letter-spacing:0.2px">R$ 6<span style="position:relative;top:3px">5</span>o,oo</div>
<div class="a gd" style="left:684px;top:526px;letter-spacing:0.2px">R$ o,oo</div>
<div class="a gd" style="left:51px;width:150px;text-align:right;top:556px;letter-spacing:1.4px">o<span style="position:relative;top:3px">7</span>/abr</div>
<div class="a gd b" style="left:218px;top:560px;letter-spacing:1.3px">Despesas</div>
<div class="a gd" style="left:473px;top:560px;letter-spacing:0.2px">R$ o,oo</div>
<div class="a gd" style="left:684px;top:560px;letter-spacing:0.2px">R$ o,oo</div>
<div class="a gd" style="left:51px;width:150px;text-align:right;top:589px;letter-spacing:1.4px">o8/abr</div>
<div class="a gd b" style="left:218px;top:594px;letter-spacing:1.3px">Receitas</div>
<div class="a gd" style="left:473px;top:592px;letter-spacing:0.2px">R$ 6<span style="position:relative;top:3px">5</span>o,oo</div>
<div class="a gd" style="left:684px;top:592px;letter-spacing:0.2px">R$ o,oo</div>
<div class="a gd" style="left:51px;width:150px;text-align:right;top:622px;letter-spacing:1.4px">o<span style="position:relative;top:3px">9</span>/abr</div>
<div class="a gd b" style="left:218px;top:626px;letter-spacing:1.3px">Despesas</div>
<div class="a gd" style="left:473px;top:626px;letter-spacing:0.2px">R$ 6<span style="position:relative;top:3px">5</span>o,oo</div>
<div class="a gd" style="left:684px;top:626px;letter-spacing:0.2px">R$ 6<span style="position:relative;top:3px">5</span>o,oo</div>
<div class="a gd" style="left:51px;width:150px;text-align:right;top:655px;letter-spacing:1.4px">ıo/abr</div>
<div class="a gd b" style="left:218px;top:660px;letter-spacing:1.3px">Receitas</div>
<div class="a gd" style="left:473px;top:658px;letter-spacing:0.2px">R$ o,oo</div>
<div class="a gd" style="left:684px;top:658px;letter-spacing:0.2px">R$ o,oo</div>
<div class="a gd" style="left:51px;width:150px;text-align:right;top:688px;letter-spacing:1.4px">ıı/abr</div>
<div class="a gd b" style="left:218px;top:692px;letter-spacing:1.3px">Despesas</div>
<div class="a gd" style="left:473px;top:692px;letter-spacing:0.2px">R$ 6<span style="position:relative;top:3px">5</span>o,oo</div>
<div class="a gd" style="left:684px;top:692px;letter-spacing:0.2px">R$ 6<span style="position:relative;top:3px">5</span>o,oo</div>
<div class="a gd" style="left:51px;width:150px;text-align:right;top:729px;letter-spacing:1.4px">ı<span style="font-size:11px">2</span>/abr</div>
<div class="a gd b" style="left:218px;top:730px;letter-spacing:1.3px">Receitas</div>
<div class="a gd" style="left:473px;top:728px;letter-spacing:0.2px">R$ o,oo</div>
<div class="a gd" style="left:684px;top:728px;letter-spacing:0.2px">R$ o,oo</div>
<div class="a gd" style="left:51px;width:150px;text-align:right;top:770px;letter-spacing:1.4px">ı<span style="position:relative;top:3px">3</span>/abr</div>
<div class="a gd b" style="left:218px;top:770px;letter-spacing:1.3px">Despesas</div>
<div class="a gd" style="left:473px;top:770px;letter-spacing:0.2px">R$ o,oo</div>
<div class="a gd" style="left:684px;top:770px;letter-spacing:0.2px">R$ o,oo</div>
<div class="a gd" style="left:51px;width:150px;text-align:right;top:811px;letter-spacing:1.4px">ı<span style="position:relative;top:3px">4</span>/abr</div>
<div class="a gd b" style="left:218px;top:812px;letter-spacing:1.3px">Receitas</div>
<div class="a gd" style="left:473px;top:810px;letter-spacing:0.2px">R$ 6<span style="position:relative;top:3px">5</span>o,oo</div>
<div class="a gd" style="left:684px;top:810px;letter-spacing:0.2px">R$ o,oo</div>
<div class="a" style="left:1543px;top:208px;width:17px;height:628px;background:#f0f0f0"></div>
<div class="a" style="left:1543px;top:233px;width:1px;height:603px;background:#e3e3e3"></div>
<div class="a" style="left:1544px;top:233px;width:16px;height:603px;background:#f4f4f4"></div>
<svg style="left:0;top:0" width="1" height="1"><path d="M1550 227 L1559 227 L1554.5 220 Z" fill="#757575" stroke="#757575" stroke-width="1" stroke-linejoin="round"/><path d="M1550 828 L1559 828 L1554.5 835 Z" fill="#757575" stroke="#757575" stroke-width="1" stroke-linejoin="round"/></svg>
<div class="a" style="left:1550px;top:232px;width:9px;height:478px;background:#727272;border-radius:4.5px"></div>

</body></html>
